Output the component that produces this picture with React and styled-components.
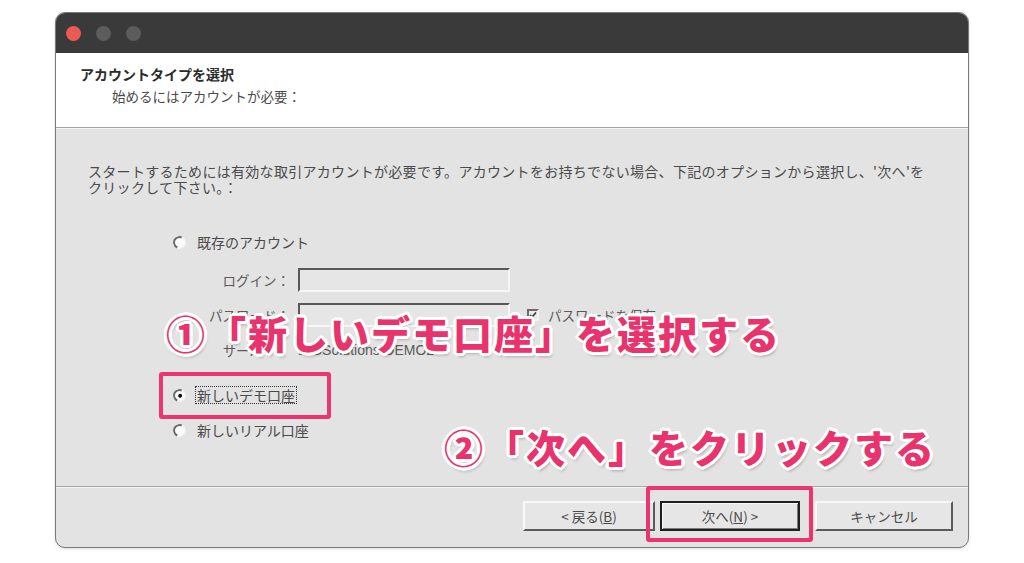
import React from "react";
import styled, { createGlobalStyle, css } from "styled-components";

const Global = createGlobalStyle`
  html, body { margin: 0; padding: 0; background: #ffffff; }
  body { font-family: "Noto Sans CJK JP", "Noto Sans", sans-serif; }
`;

const Page = styled.div`
  width: 1024px;
  height: 563px;
  box-sizing: border-box;
  padding: 12px 0 0 55px;
  overflow: hidden;
`;

const Window = styled.div`
  position: relative;
  width: 914px;
  height: 536px;
  box-sizing: border-box;
  border: 1.5px solid #7b7b7b;
  border-radius: 10px;
  overflow: hidden;
  display: flex;
  flex-direction: column;
  background: #e3e3e3;
  box-shadow: 0 1px 3px rgba(0,0,0,0.15);
`;

const TitleBar = styled.div`
  height: 40px;
  flex: none;
  background: #3a3a3a;
  display: flex;
  align-items: center;
  gap: 15px;
  padding-left: 10px;
`;

const Light = styled.span`
  width: 15px;
  height: 15px;
  border-radius: 50%;
  background: ${(p) => p.$color};
`;

const Header = styled.div`
  height: 75px;
  flex: none;
  box-sizing: border-box;
  background: #ffffff;
  border-bottom: 1px solid #a5a5a5;
  box-shadow: 0 1px 0 #f7f7f7;
  padding: 12px 0 0 24px;
  color: #2a2a2a;
`;

const HeaderTitle = styled.div`
  font-size: 14px;
  font-weight: 700;
  line-height: 18px;
  color: #2b2b2b;
`;

const HeaderSub = styled.div`
  font-size: 13.5px;
  line-height: 18px;
  margin: 4px 0 0 32px;
  color: #4a4a4a;
`;

const Body = styled.div`
  flex: 1;
  box-sizing: border-box;
  padding: 35px 0 0 32px;
  border-bottom: 1px solid #a5a5a5;
  color: #4a4a4a;
  font-size: 13.5px;
`;

const Description = styled.p`
  margin: 0;
  font-size: 14px;
  line-height: 16px;
  letter-spacing: 0.3px;
  white-space: nowrap;
`;

const Options = styled.div`
  display: flex;
  flex-direction: column;
  margin: 39px 0 0 85px;
`;

const RadioRow = styled.div`
  display: flex;
  align-items: center;
  gap: 10px;
  height: 16px;
  margin-top: ${(p) => p.$mt || 0}px;
`;

const RadioDot = styled.span`
  position: relative;
  width: 9px;
  height: 9px;
  border-radius: 50%;
  background: #fbfbfb;
  border: 2px solid;
  border-color: #6a6a6a #f4f4f4 #f4f4f4 #6a6a6a;
  transform: rotate(-20deg);
  ${(p) =>
    p.$checked &&
    css`
      &::after {
        content: "";
        position: absolute;
        left: 2.5px;
        top: 2.5px;
        width: 4px;
        height: 4px;
        border-radius: 50%;
        background: #111;
      }
    `}
`;

const RadioLabel = styled.span`
  line-height: 16px;
  padding: 0 1px;
  font-size: 14px;
  ${(p) =>
    p.$focus &&
    css`
      outline: 1px dotted #333;
      outline-offset: 0px;
    `}
`;

const FieldRow = styled.div`
  display: flex;
  align-items: center;
  margin-top: ${(p) => p.$mt || 0}px;
  height: ${(p) => p.$h || 24}px;
`;

const FieldLabel = styled.span`
  width: 125px;
  text-align: right;
  padding-right: 8px;
  box-sizing: border-box;
  color: #5a5a5a;
`;

const Input = styled.div`
  width: 212px;
  height: 24px;
  box-sizing: border-box;
  background: #e6e6e6;
  border: 2px solid;
  border-color: #585858 #f6f6f6 #f6f6f6 #585858;
`;

const Check = styled.span`
  width: 12px;
  height: 12px;
  box-sizing: border-box;
  margin-left: 17px;
  border: 2px solid;
  border-color: #6a6a6a #f4f4f4 #f4f4f4 #6a6a6a;
  background: #e9e9e9;
  display: inline-flex;
  align-items: center;
  justify-content: center;
`;

const CheckText = styled.span`
  margin-left: 9px;
  color: #5a5a5a;
`;

const ServerValue = styled.span`
  color: #5a5a5a;
  font-family: "Liberation Sans", "Noto Sans CJK JP", sans-serif;
  font-size: 14px;
`;

const Footer = styled.div`
  height: 60px;
  flex: none;
  box-sizing: border-box;
  border-top: 1px solid #f4f4f4;
  display: flex;
  justify-content: flex-end;
  align-items: flex-start;
  padding: 13px 15px 0 0;
`;

const Button = styled.div`
  width: ${(p) => p.$w}px;
  height: 30px;
  box-sizing: border-box;
  margin-left: ${(p) => p.$ml || 0}px;
  display: flex;
  align-items: center;
  justify-content: center;
  font-size: 13.5px;
  color: #4a4a4a;
  background: #e6e6e6;
  border: 2px solid;
  border-color: #f8f8f8 #5a5a5a #5a5a5a #f8f8f8;
  ${(p) =>
    p.$default &&
    css`
      border: 2px solid #1e1e1e;
      box-shadow: inset 1px 1px 0 #f8f8f8, inset -1px -1px 0 #7a7a7a;
    `}
`;

const U = styled.span`
  text-decoration: underline;
`;

const Callout = styled.div`
  position: absolute;
  left: ${(p) => p.$x}px;
  top: ${(p) => p.$y}px;
  font-size: 39px;
  font-weight: 900;
  line-height: 1;
  white-space: nowrap;
  color: #e8336c;
  letter-spacing: 2px;
  text-shadow:
    2px 0 0 #fff, -2px 0 0 #fff, 0 2px 0 #fff, 0 -2px 0 #fff,
    2px 2px 0 #fff, -2px -2px 0 #fff, 2px -2px 0 #fff, -2px 2px 0 #fff,
    3px 0 0 #fff, -3px 0 0 #fff, 0 3px 0 #fff, 0 -3px 0 #fff,
    3px 1px 0 #fff, -3px 1px 0 #fff, 1px 3px 0 #fff, 1px -3px 0 #fff,
    2px 4px 3px rgba(0,0,0,0.25);
`;

const Highlight = styled.div`
  position: absolute;
  left: ${(p) => p.$x}px;
  top: ${(p) => p.$y}px;
  width: ${(p) => p.$w}px;
  height: ${(p) => p.$h}px;
  box-sizing: border-box;
  border: 4px solid #ec3470;
  border-radius: 3px;
`;

export default function App() {
  return (
    <Page>
      <Global />
      <Window>
        <TitleBar>
          <Light $color="#ec5a55" />
          <Light $color="#5c5c5c" />
          <Light $color="#5c5c5c" />
        </TitleBar>
        <Header>
          <HeaderTitle>アカウントタイプを選択</HeaderTitle>
          <HeaderSub>始めるにはアカウントが必要：</HeaderSub>
        </Header>
        <Body>
          <Description>
            スタートするためには有効な取引アカウントが必要です。アカウントをお持ちでない場合、下記のオプションから選択し、'次へ'を
            <br />
            クリックして下さい。：
          </Description>
          <Options>
            <RadioRow>
              <RadioDot />
              <RadioLabel>既存のアカウント</RadioLabel>
            </RadioRow>
            <FieldRow $mt={18}>
              <FieldLabel>ログイン：</FieldLabel>
              <Input />
            </FieldRow>
            <FieldRow $mt={11}>
              <FieldLabel>パスワード：</FieldLabel>
              <Input />
              <Check>
                <svg width="8" height="8" viewBox="0 0 8 8">
                  <path d="M1 4 L3 6 L7 1.5" fill="none" stroke="#333" strokeWidth="1.6" />
                </svg>
              </Check>
              <CheckText>パスワードを保存</CheckText>
            </FieldRow>
            <FieldRow $mt={15} $h={16}>
              <FieldLabel>サーバー：</FieldLabel>
              <ServerValue>BIGSolutions-DEMO2</ServerValue>
            </FieldRow>
            <RadioRow $mt={29}>
              <RadioDot $checked />
              <RadioLabel $focus>新しいデモ口座</RadioLabel>
            </RadioRow>
            <RadioRow $mt={19}>
              <RadioDot />
              <RadioLabel>新しいリアル口座</RadioLabel>
            </RadioRow>
          </Options>
        </Body>
        <Footer>
          <Button $w={132}>
            &lt; 戻る(<U>B</U>)
          </Button>
          <Button $w={140} $ml={5} $default>
            次へ(<U>N</U>) &gt;
          </Button>
          <Button $w={138} $ml={15}>
            キャンセル
          </Button>
        </Footer>
        <Highlight $x={103} $y={359} $w={172} $h={47} />
        <Highlight $x={590} $y={473} $w={167} $h={56} />
        <Callout $x={110} $y={300}>
          ①「新しいデモ口座」を選択する
        </Callout>
        <Callout $x={388} $y={414}>
          ②「次へ」をクリックする
        </Callout>
      </Window>
    </Page>
  );
}
